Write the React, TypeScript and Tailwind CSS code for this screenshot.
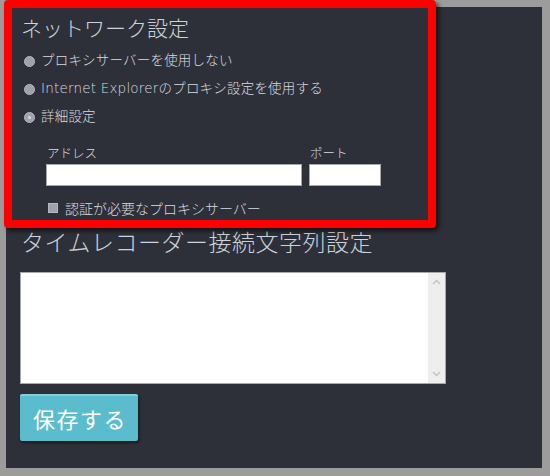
import React from 'react';

const jp = 'font-["Noto_Sans_CJK_JP",sans-serif] font-light';
const mixed = 'font-["DejaVu_Sans","Noto_Sans_CJK_JP",sans-serif] font-light';

function Radio({ label, checked }: { label: string; checked?: boolean }) {
  return (
    <div className="flex items-center h-[28px] pl-[4px]">
      <span className="w-[11px] h-[11px] rounded-full bg-[#9ea2ae] border border-[#b4b8c2] flex items-center justify-center">
        {checked && <span className="w-[3px] h-[3px] rounded-full bg-[#d6d9de]" />}
      </span>
      <span className={`ml-[6px] text-[13.5px] leading-none text-[#d8dbe0] tracking-[0.2px] ${mixed}`}>{label}</span>
    </div>
  );
}

export default function App() {
  return (
    <div className="relative w-[550px] h-[476px] bg-[#9c9c9c] pt-[7px] pl-[6px] pr-[8px] pb-[8px] overflow-hidden">
      <div className="w-full h-full bg-[#2d3038] flex flex-col pl-[14px]">
        <h1 className={`mt-[6px] ml-[1px] text-[21px] leading-[28px] text-[#ccd3dc] ${jp}`}>ネットワーク設定</h1>

        <div className="mt-[6px] flex flex-col">
          <Radio label="プロキシサーバーを使用しない" />
          <Radio label="Internet Explorerのプロキシ設定を使用する" />
          <Radio label="詳細設定" checked />
        </div>

        <div className="mt-[14px] ml-[26px] flex gap-[7px]">
          <div className="flex flex-col w-[256px]">
            <span className={`text-[12.5px] leading-[16px] text-[#d8dbe0] ml-[1px] ${jp}`}>アドレス</span>
            <div className="mt-[3px] h-[22px] bg-white border border-[#a8a8a8]" />
          </div>
          <div className="flex flex-col w-[72px]">
            <span className={`text-[12.5px] leading-[16px] text-[#d8dbe0] ml-[1px] ${jp}`}>ポート</span>
            <div className="mt-[3px] h-[22px] bg-white border border-[#a8a8a8]" />
          </div>
        </div>

        <div className="mt-[12px] ml-[28px] h-[20px] flex items-center">
          <span className="w-[10px] h-[10px] bg-[#9ea2ae] border border-[#b4b8c2]" />
          <span className={`ml-[7px] text-[14px] leading-none text-[#d8dbe0] ${jp}`}>認証が必要なプロキシサーバー</span>
        </div>

        <h2 className={`mt-[8px] ml-[1px] text-[23px] leading-[30px] text-[#ccd3dc] tracking-[0.5px] ${jp}`}>タイムレコーダー接続文字列設定</h2>

        <div className="mt-[16px] w-[426px] h-[112px] bg-white border border-[#a8a8a8] flex justify-end">
          <div className="w-[17px] h-full bg-[#eeeeee] flex flex-col items-center justify-between py-[6px]">
            <svg width="9" height="6" viewBox="0 0 9 6">
              <path d="M1 5 L4.5 1.5 L8 5" stroke="#c4c4c4" strokeWidth="1.5" fill="none" />
            </svg>
            <svg width="9" height="6" viewBox="0 0 9 6">
              <path d="M1 1 L4.5 4.5 L8 1" stroke="#c4c4c4" strokeWidth="1.5" fill="none" />
            </svg>
          </div>
        </div>

        <button className='mt-[10px] w-[118px] h-[47px] bg-[#5bbccd] border-t-2 border-[#80d0dc] rounded-[2px] shadow-[1px_2px_3px_rgba(0,0,0,0.5)] text-left pl-[13px] text-white text-[22px] tracking-[1.5px] font-["Noto_Sans_CJK_JP",sans-serif] font-normal'>
          保存する
        </button>
      </div>

      {/* red highlight box */}
      <div className="absolute left-[4px] top-0 w-[432px] h-[228px] border-[8px] border-[#ff0000] rounded-[4px] shadow-[3px_3px_4px_rgba(0,0,0,0.6)] pointer-events-none" />
    </div>
  );
}
